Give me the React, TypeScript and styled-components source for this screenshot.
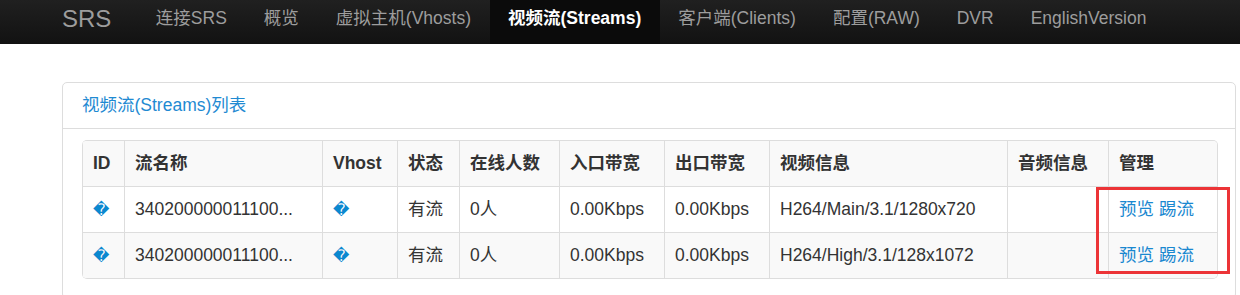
import styled, { createGlobalStyle } from "styled-components";

const GlobalStyle = createGlobalStyle`
  html, body {
    margin: 0;
    padding: 0;
    background: #fff;
  }
  body {
    font-family: "Liberation Sans", Arial, "Noto Sans CJK SC", sans-serif;
    font-size: 17.5px;
    line-height: 25px;
    color: #333;
  }
`;

const NavBar = styled.div`
  display: flex;
  align-items: stretch;
  height: 44px;
  padding-left: 43px;
  background: linear-gradient(to bottom, #202020, #121212);
`;

const Brand = styled.a`
  padding: 5px 26px 0 19px;
  font-size: 24px;
  line-height: 28px;
  color: #9d9d9d;
  text-decoration: none;
`;

const NavLink = styled.a<{ $active?: boolean }>`
  padding: 6px 18.5px 0;
  line-height: 25px;
  color: ${(p) => (p.$active ? "#fff" : "#9d9d9d")};
  font-weight: ${(p) => (p.$active ? "bold" : "normal")};
  background: ${(p) => (p.$active ? "#0b0b0b" : "transparent")};
  text-decoration: none;
  white-space: nowrap;
`;

const Main = styled.div`
  padding: 38px 4px 0 62px;
`;

const Panel = styled.div`
  border: 1px solid #ddd;
  border-radius: 5px;
  background: #fff;
`;

const PanelHeading = styled.div`
  padding: 10px 19px;
  border-bottom: 1px solid #ddd;
  color: #1f8ad2;
`;

const PanelBody = styled.div`
  position: relative;
  padding: 11px 18px 19px 19px;
`;

const Table = styled.table`
  width: 1135px;
  table-layout: fixed;
  border-collapse: separate;
  border-spacing: 0;
  border: 1px solid #ddd;
  border-left: 0;
  border-radius: 5px;
  overflow: hidden;

  th,
  td {
    box-sizing: border-box;
    padding: 10px 10px;
    border-left: 1px solid #ddd;
    text-align: left;
    white-space: nowrap;
    overflow: hidden;
  }
  th {
    font-weight: bold;
  }
  tbody td {
    border-top: 1px solid #ddd;
  }
`;

const Row = styled.tr<{ $striped?: boolean }>`
  background: ${(p) => (p.$striped ? "#f9f9f9" : "#fff")};
`;

const HeadRow = styled.tr`
  background: #f9f9f9;
`;

const Glyph = styled.a`
  font-family: "DejaVu Sans", sans-serif;
  font-size: 16px;
  color: #0b88cf;
  text-decoration: none;
`;

const Action = styled.a`
  color: #1a88d0;
  text-decoration: none;
  margin-right: 5px;
`;

const Highlight = styled.div`
  position: absolute;
  left: 1033px;
  top: 58px;
  width: 134px;
  height: 87px;
  box-sizing: border-box;
  border: 3px solid #ec3437;
  pointer-events: none;
`;

const navItems = [
  "连接SRS",
  "概览",
  "虚拟主机(Vhosts)",
  "视频流(Streams)",
  "客户端(Clients)",
  "配置(RAW)",
  "DVR",
  "EnglishVersion",
];

const columns = [
  { title: "ID", width: 42 },
  { title: "流名称", width: 198 },
  { title: "Vhost", width: 75 },
  { title: "状态", width: 62 },
  { title: "在线人数", width: 100 },
  { title: "入口带宽", width: 105 },
  { title: "出口带宽", width: 105 },
  { title: "视频信息", width: 238 },
  { title: "音频信息", width: 101 },
  { title: "管理", width: 109 },
];

const streams = [
  { name: "340200000011100...", status: "有流", clients: "0人", recv: "0.00Kbps", send: "0.00Kbps", video: "H264/Main/3.1/1280x720" },
  { name: "340200000011100...", status: "有流", clients: "0人", recv: "0.00Kbps", send: "0.00Kbps", video: "H264/High/3.1/128x1072" },
];

function App() {
  return (
    <>
      <GlobalStyle />
      <NavBar>
        <Brand>SRS</Brand>
        {navItems.map((item) => (
          <NavLink key={item} $active={item === "视频流(Streams)"}>
            {item}
          </NavLink>
        ))}
      </NavBar>
      <Main>
        <Panel>
          <PanelHeading>视频流(Streams)列表</PanelHeading>
          <PanelBody>
            <Table>
              <colgroup>
                {columns.map((c) => (
                  <col key={c.title} style={{ width: c.width }} />
                ))}
              </colgroup>
              <thead>
                <HeadRow>
                  {columns.map((c) => (
                    <th key={c.title}>{c.title}</th>
                  ))}
                </HeadRow>
              </thead>
              <tbody>
                {streams.map((s, i) => (
                  <Row key={i} $striped={i % 2 === 1}>
                    <td><Glyph>{"\uFFFD"}</Glyph></td>
                    <td>{s.name}</td>
                    <td><Glyph>{"\uFFFD"}</Glyph></td>
                    <td>{s.status}</td>
                    <td>{s.clients}</td>
                    <td>{s.recv}</td>
                    <td>{s.send}</td>
                    <td>{s.video}</td>
                    <td></td>
                    <td>
                      <Action>预览</Action>
                      <Action>踢流</Action>
                    </td>
                  </Row>
                ))}
              </tbody>
            </Table>
            <Highlight />
          </PanelBody>
        </Panel>
      </Main>
    </>
  );
}

export default App;
